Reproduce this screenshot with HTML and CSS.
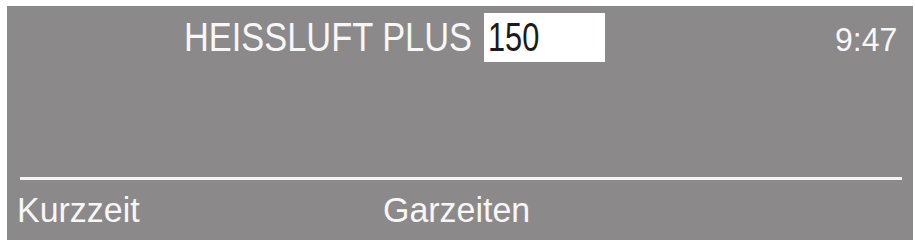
FILE: index.html
```html
<!DOCTYPE html>
<html lang="de">
<head>
<meta charset="utf-8">
<title>Heissluft Plus</title>
<link rel="stylesheet" href="styles.css">
</head>
<body>
<div class="screen">
  <div class="top">
    <div class="title-col"><span class="title">HEISSLUFT PLUS</span></div>
    <div class="field"><span class="value">150</span></div>
    <div class="clock"><span class="time">9:47</span></div>
  </div>
  <div class="spacer"></div>
  <div class="rule"></div>
  <div class="bottom">
    <div class="soft-col"><span class="soft">Kurzzeit</span></div>
    <div class="soft-col"><span class="soft">Garzeiten</span></div>
  </div>
</div>
</body>
</html>
```
FILE: styles.css
```css
html, body {
  margin: 0;
  padding: 0;
  background: #ffffff;
}
body {
  width: 915px;
  height: 243px;
  overflow: hidden;
  font-family: "Liberation Sans", Arial, sans-serif;
}
.screen {
  margin: 6px 0 0 7px;
  width: 906px;
  height: 234px;
  background: #8c898a;
  display: flex;
  flex-direction: column;
  box-sizing: border-box;
}
.top {
  display: flex;
  align-items: baseline;
  padding: 7px 16px 0 177px;
}
.title-col {
  width: 300px;
  flex: none;
  white-space: nowrap;
}
.title {
  display: inline-block;
  font-size: 40px;
  line-height: 40px;
  color: #f7f7f7;
  transform: scaleX(0.86);
  transform-origin: left center;
}
.field {
  width: 121px;
  height: 49px;
  box-sizing: border-box;
  padding: 4px 0 0 4px;
  background: #ffffff;
  flex: none;
  white-space: nowrap;
}
.value {
  display: inline-block;
  font-size: 41px;
  line-height: 41px;
  color: #1b1b1b;
  transform: scaleX(0.75);
  transform-origin: left center;
}
.clock {
  margin-left: auto;
  white-space: nowrap;
}
.time {
  display: inline-block;
  font-size: 34px;
  line-height: 34px;
  color: #f7f7f7;
  transform: scaleX(0.94);
  transform-origin: right center;
}
.spacer {
  flex: 1;
}
.rule {
  height: 3px;
  margin: 0 11px 0 13px;
  background: #f4f4f4;
}
.bottom {
  display: grid;
  grid-template-columns: 366px auto;
  padding: 12px 0 0 10px;
  height: 60px;
  box-sizing: border-box;
}
.soft-col {
  white-space: nowrap;
}
.soft {
  display: inline-block;
  font-size: 35px;
  line-height: 35px;
  color: #f7f7f7;
  transform: scaleX(0.97);
  transform-origin: left center;
}
```
